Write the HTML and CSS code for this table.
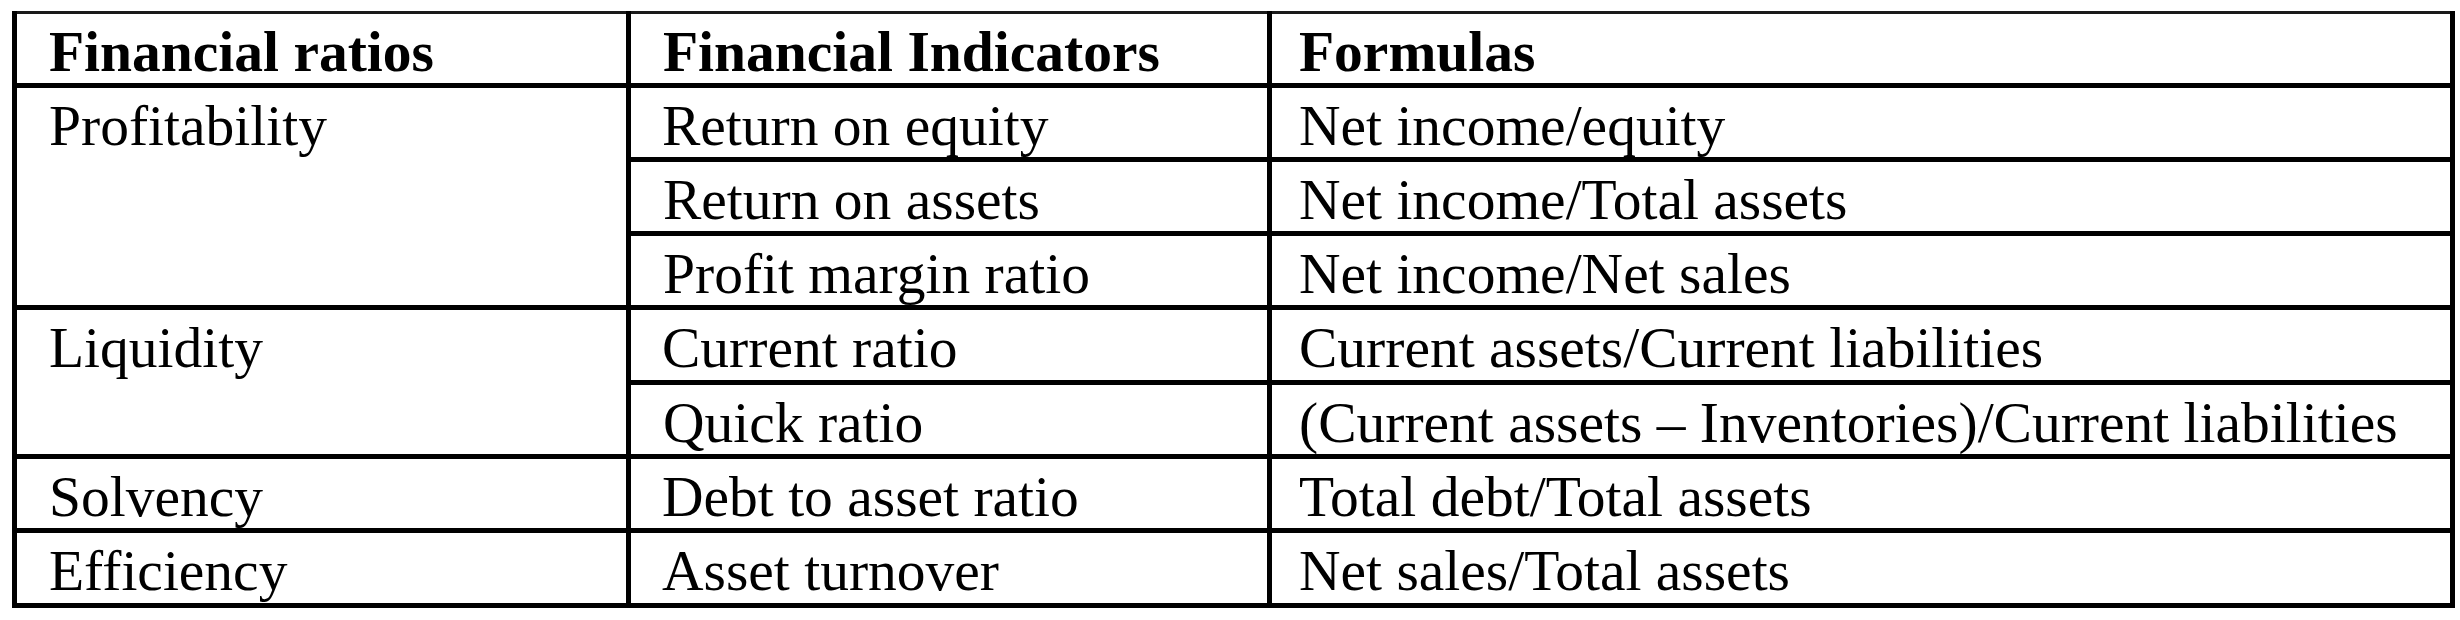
FILE: index.html
```html
<!DOCTYPE html>
<html lang="en">
<head>
<meta charset="utf-8">
<title>Financial ratios</title>
<link rel="stylesheet" href="styles.css">
</head>
<body>
<table class="ratios">
  <colgroup>
    <col class="c1">
    <col class="c2">
    <col class="c3">
  </colgroup>
  <thead>
    <tr class="head">
      <th>Financial ratios</th>
      <th>Financial Indicators</th>
      <th class="f">Formulas</th>
    </tr>
  </thead>
  <tbody>
    <tr>
      <td rowspan="3">Profitability</td>
      <td>Return on equity</td>
      <td class="f">Net income/equity</td>
    </tr>
    <tr>
      <td>Return on assets</td>
      <td class="f">Net income/Total assets</td>
    </tr>
    <tr>
      <td>Profit margin ratio</td>
      <td class="f">Net income/Net sales</td>
    </tr>
    <tr>
      <td rowspan="2">Liquidity</td>
      <td>Current ratio</td>
      <td class="f">Current assets/Current liabilities</td>
    </tr>
    <tr>
      <td>Quick ratio</td>
      <td class="f">(Current assets – Inventories)/Current liabilities</td>
    </tr>
    <tr>
      <td>Solvency</td>
      <td>Debt to asset ratio</td>
      <td class="f">Total debt/Total assets</td>
    </tr>
    <tr>
      <td>Efficiency</td>
      <td>Asset turnover</td>
      <td class="f">Net sales/Total assets</td>
    </tr>
  </tbody>
</table>
</body>
</html>
```
FILE: styles.css
```css
html, body {
  margin: 0;
  padding: 0;
  background: #ffffff;
}

body {
  font-family: "Liberation Serif", "Times New Roman", serif;
  color: #000000;
}

.ratios {
  margin: 11px 0 0 12px;
  width: 2438px;
  table-layout: fixed;
  border-collapse: collapse;
  font-size: 57.5px;
}

.c1 { width: 614px; }
.c2 { width: 641px; }
.c3 { width: 1183px; }

.ratios th,
.ratios td {
  border: 5px solid #000000;
  padding: 8px 0 0 32px;
  line-height: 60px;
  vertical-align: top;
  text-align: left;
  white-space: nowrap;
}

.ratios th {
  font-weight: bold;
  border-top: 3px solid #1a1a1a;
}

.ratios td + td {
  padding-left: 31px;
}

.ratios .f,
.ratios td.f,
.ratios th.f {
  padding-left: 27px;
}

.ratios tr {
  height: 74.3px;
}

.ratios tr.head {
  height: 72.5px;
}
```
